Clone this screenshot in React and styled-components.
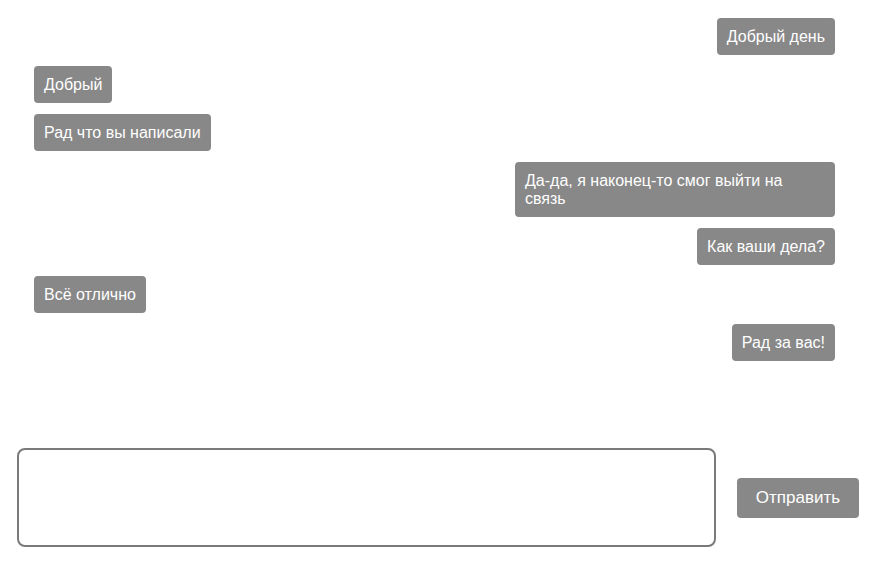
import React, { useState } from 'react';
import styled, { createGlobalStyle } from 'styled-components';

const messages = [
  { id: 1, text: 'Добрый день', mine: true },
  { id: 2, text: 'Добрый', mine: false },
  { id: 3, text: 'Рад что вы написали', mine: false },
  { id: 4, text: 'Да-да, я наконец-то смог выйти на связь', mine: true },
  { id: 5, text: 'Как ваши дела?', mine: true },
  { id: 6, text: 'Всё отлично', mine: false },
  { id: 7, text: 'Рад за вас!', mine: true },
];

function App() {
  const [value, setValue] = useState('');

  return (
    <>
      <GlobalStyle />
      <Page>
        <MessageList>
          {messages.map((m) => (
            <Bubble key={m.id} mine={m.mine}>
              {m.text}
            </Bubble>
          ))}
        </MessageList>
        <Composer>
          <Input value={value} onChange={(e) => setValue(e.target.value)} />
          <SendButton onClick={() => setValue('')}>Отправить</SendButton>
        </Composer>
      </Page>
    </>
  );
}

export default App;

const GlobalStyle = createGlobalStyle`
  body {
    margin: 0;
    font-family: "Liberation Sans", Arial, sans-serif;
    background: #fff;
  }
`;

const Page = styled.div`
  height: 100vh;
  display: flex;
  flex-direction: column;
  box-sizing: border-box;
  padding-bottom: 15px;
`;

const MessageList = styled.div`
  display: flex;
  flex-direction: column;
  gap: 11px;
  padding: 18px 38px 0 34px;
`;

const Bubble = styled.div`
  align-self: ${(props) => (props.mine ? 'flex-end' : 'flex-start')};
  max-width: 300px;
  padding: 10px 10px 9px;
  background-color: #888888;
  color: #fff;
  font-size: 16px;
  line-height: 18px;
  border-radius: 4px;
`;

const Composer = styled.div`
  margin-top: auto;
  display: flex;
  align-items: center;
  gap: 21px;
  padding-left: 17px;
`;

const Input = styled.textarea`
  width: 699px;
  height: 99px;
  box-sizing: border-box;
  border: 2px solid #7a7a7a;
  border-radius: 8px;
  resize: none;
  outline: none;
  font-family: "Liberation Sans", Arial, sans-serif;
  font-size: 16px;
  padding: 8px;
`;

const SendButton = styled.button`
  width: 122px;
  height: 40px;
  border: none;
  border-radius: 4px;
  background-color: #888888;
  color: #fff;
  font-family: "Liberation Sans", Arial, sans-serif;
  font-size: 17px;
  cursor: pointer;
`;
